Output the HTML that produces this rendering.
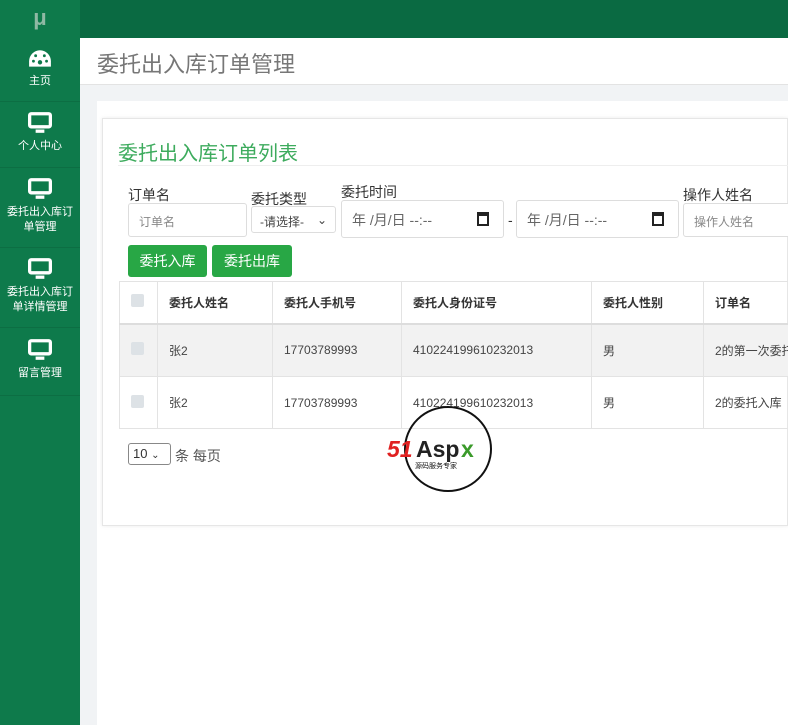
<!DOCTYPE html><html><head><meta charset="utf-8"><style>
*{box-sizing:border-box;margin:0;padding:0}
body{width:788px;height:725px;overflow:hidden;font-family:"Liberation Sans","Noto Sans CJK SC",sans-serif;background:#f1f3f5;position:relative;color:#333}
.top{position:absolute;left:0;top:0;width:788px;height:38px;background:#0a6a42}
.logo{position:absolute;left:0;top:0;width:80px;height:38px;background:#0e7a4b;color:#8fb9a4;font-size:22px;font-weight:bold;text-align:center;line-height:36px}
.side{position:absolute;left:0;top:38px;width:80px;height:687px;background:#0e7a4b}
.it{border-bottom:1px solid #0c6e43;color:#fff;font-size:11px;text-align:center;line-height:15px}
.it svg{display:block;margin:0 auto 5px}
.hdr{position:absolute;left:80px;top:38px;right:0;height:47px;background:#fff;border-bottom:1px solid #e3e3e3;font-size:22px;color:#777;padding:9px 0 0 17px}
.outer{position:absolute;left:97px;top:101px;right:0;bottom:0;background:#fff}
.card{position:absolute;left:102px;top:118px;right:0;height:408px;background:#fff;border:1px solid #e6e6e6;box-shadow:0 0 4px rgba(0,0,0,.08)}
.ttl{position:absolute;left:118px;top:137px;font-size:20px;color:#3dab5d}
.line{position:absolute;left:118px;top:165px;right:0;border-top:1px solid #eee}
.lbl{position:absolute;font-size:14px;color:#333}
.inp{position:absolute;border:1px solid #ddd;border-radius:3px;height:34px;font-size:12px;color:#888;padding:9px 10px;background:#fff}
.btn{position:absolute;top:245px;height:32px;background:#28a745;color:#fff;font-size:14px;line-height:32px;text-align:center;border-radius:3px}
table{position:absolute;left:119px;top:281px;border-collapse:collapse;font-size:12px;table-layout:fixed;width:720px}
td,th{border:1px solid #e3e3e3;padding:0 11px;text-align:left;height:52px;color:#444;white-space:nowrap;overflow:hidden}
th{font-weight:bold;height:42px;border-bottom:2px solid #ddd;color:#333}
tr.g td{background:#f2f2f2;height:53px}
.cb{display:inline-block;width:13px;height:13px;background:#dde2e6;border-radius:2px}
</style></head><body>
<div class="top"></div><div class="logo">μ</div>
<div class="side">
<div class="it" style="height:64px;padding-top:11px"><svg width="24" height="20" viewBox="0 0 22 18"><path d="M11 1A10 10 0 0 0 1 11v5h20v-5A10 10 0 0 0 11 1z" fill="#fff"/><circle cx="11" cy="12" r="2" fill="#0e7a4b"/><circle cx="5" cy="11" r="1.3" fill="#0e7a4b"/><circle cx="17" cy="11" r="1.3" fill="#0e7a4b"/><circle cx="7" cy="6" r="1.3" fill="#0e7a4b"/><circle cx="15" cy="6" r="1.3" fill="#0e7a4b"/></svg>主页</div>
<div class="it" style="height:66px;padding-top:10px"><svg width="24" height="22" viewBox="0 0 22 20"><rect x="1.5" y="1.5" width="19" height="12" rx="1.5" fill="none" stroke="#fff" stroke-width="3"/><rect x="7" y="16" width="8" height="3" fill="#fff"/></svg>个人中心</div>
<div class="it" style="height:80px;padding-top:10px"><svg width="24" height="22" viewBox="0 0 22 20"><rect x="1.5" y="1.5" width="19" height="12" rx="1.5" fill="none" stroke="#fff" stroke-width="3"/><rect x="7" y="16" width="8" height="3" fill="#fff"/></svg>委托出入库订<br>单管理</div>
<div class="it" style="height:80px;padding-top:10px"><svg width="24" height="22" viewBox="0 0 22 20"><rect x="1.5" y="1.5" width="19" height="12" rx="1.5" fill="none" stroke="#fff" stroke-width="3"/><rect x="7" y="16" width="8" height="3" fill="#fff"/></svg>委托出入库订<br>单详情管理</div>
<div class="it" style="height:68px;padding-top:11px"><svg width="24" height="22" viewBox="0 0 22 20"><rect x="1.5" y="1.5" width="19" height="12" rx="1.5" fill="none" stroke="#fff" stroke-width="3"/><rect x="7" y="16" width="8" height="3" fill="#fff"/></svg>留言管理</div>
</div>
<div class="hdr">委托出入库订单管理</div>
<div class="outer"></div><div class="card"></div>
<div class="ttl">委托出入库订单列表</div><div class="line"></div>
<div class="lbl" style="left:128px;top:185px">订单名</div>
<div class="lbl" style="left:251px;top:189px">委托类型</div>
<div class="lbl" style="left:341px;top:182px">委托时间</div>
<div class="lbl" style="left:683px;top:185px">操作人姓名</div>
<div class="inp" style="left:128px;top:203px;width:119px">订单名</div>
<div class="inp" style="left:251px;top:206px;width:85px;height:27px;padding:6px 8px;color:#444">-请选择- <span style="float:right">⌄</span></div>
<div class="inp" style="left:341px;top:200px;width:163px;height:38px;font-size:14px;color:#666">年 /月/日 --:-- <span style="position:absolute;right:14px;top:11px;width:12px;height:14px;border:2px solid #222;border-top-width:4px"></span></div>
<div class="lbl" style="left:508px;top:212px">-</div>
<div class="inp" style="left:516px;top:200px;width:163px;height:38px;font-size:14px;color:#666">年 /月/日 --:-- <span style="position:absolute;right:14px;top:11px;width:12px;height:14px;border:2px solid #222;border-top-width:4px"></span></div>
<div class="inp" style="left:683px;top:203px;width:120px">操作人姓名</div>
<div class="btn" style="left:128px;width:79px">委托入库</div>
<div class="btn" style="left:212px;width:80px">委托出库</div>
<table>
<colgroup><col style="width:38px"><col style="width:115px"><col style="width:129px"><col style="width:190px"><col style="width:112px"><col></colgroup>
<tr><th><span class="cb"></span></th><th>委托人姓名</th><th>委托人手机号</th><th>委托人身份证号</th><th>委托人性别</th><th>订单名</th></tr>
<tr class="g"><td><span class="cb"></span></td><td>张2</td><td>17703789993</td><td>410224199610232013</td><td>男</td><td>2的第一次委托</td></tr>
<tr><td><span class="cb"></span></td><td>张2</td><td>17703789993</td><td>410224199610232013</td><td>男</td><td>2的委托入库</td></tr>
</table>
<div class="inp" style="left:128px;top:443px;width:43px;height:22px;padding:2px 4px;font-size:13px;color:#333;border-color:#888">10 <span style="font-size:10px">⌄</span></div>
<div class="lbl" style="left:175px;top:446px;color:#555">条 每页</div>
<svg style="position:absolute;left:385px;top:405px" width="130" height="90"><ellipse cx="63" cy="44" rx="43" ry="42" fill="none" stroke="#111" stroke-width="2"/><text x="2" y="52" font-size="23" font-weight="bold" font-style="italic" fill="#e02020" font-family="Liberation Sans">51</text><text x="31" y="52" font-size="23" font-weight="bold" fill="#222" font-family="Liberation Sans">Asp</text><text x="76" y="52" font-size="23" font-weight="bold" fill="#3a9a2a" font-family="Liberation Sans">x</text><text x="30" y="63" font-size="7" fill="#111">源码服务专家</text></svg>
</body></html>
